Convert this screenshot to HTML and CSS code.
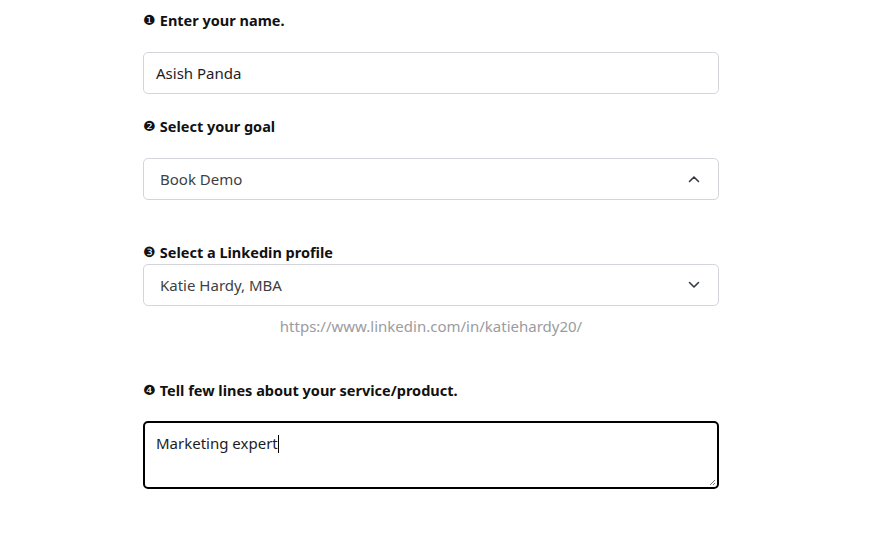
FILE: index.html
```html
<!DOCTYPE html>
<html>
<head>
<meta charset="utf-8">
<link rel="stylesheet" href="styles.css">
</head>
<body>
<form class="form">
  <div class="field f1">
    <label class="label"><span class="num">&#x2776;</span> Enter your name.</label>
    <div class="input">Asish Panda</div>
  </div>
  <div class="field f2">
    <label class="label"><span class="num">&#x2777;</span> Select your goal</label>
    <div class="select">
      <span>Book Demo</span>
      <svg class="chev" width="12" height="8" viewBox="0 0 12 8"><path d="M1.5 6.5 L6 2 L10.5 6.5" fill="none" stroke="#343a40" stroke-width="1.6" stroke-linecap="round" stroke-linejoin="round"/></svg>
    </div>
  </div>
  <div class="field f3">
    <label class="label"><span class="num">&#x2778;</span> Select a Linkedin profile</label>
    <div class="select">
      <span>Katie Hardy, MBA</span>
      <svg class="chev" width="12" height="8" viewBox="0 0 12 8"><path d="M1.5 1.5 L6 6 L10.5 1.5" fill="none" stroke="#343a40" stroke-width="1.6" stroke-linecap="round" stroke-linejoin="round"/></svg>
    </div>
    <div class="link">https://www.linkedin.com/in/katiehardy20/</div>
  </div>
  <div class="field f4">
    <label class="label"><span class="num">&#x2779;</span> Tell few lines about your service/product.</label>
    <div class="textarea">Marketing expert<span class="caret"></span>
      <svg class="grip" width="8" height="8" viewBox="0 0 8 8"><path d="M7 2 L2 7 M7 5 L5 7" stroke="#777" stroke-width="1"/></svg>
    </div>
  </div>
</form>
</body>
</html>
```

FILE: styles.css
```css
html, body {
  margin: 0;
  padding: 0;
  background: #ffffff;
}
body {
  font-family: "Noto Sans", "Open Sans", sans-serif;
  color: #212529;
}
.form {
  width: 576px;
  margin-left: 143px;
  padding-top: 10px;
  display: flex;
  flex-direction: column;
}
.field {
  display: flex;
  flex-direction: column;
}
.label {
  font-weight: 700;
  font-size: 14.5px;
  line-height: 20px;
  color: #111;
  display: flex;
  align-items: center;
  white-space: pre;
}
.num {
  font-family: "DejaVu Sans", sans-serif;
  font-size: 14px;
  font-weight: 400;
  width: 13px;
  line-height: 20px;
}
.input, .select {
  box-sizing: border-box;
  height: 42px;
  border: 1px solid #d3d5da;
  border-radius: 5px;
  display: flex;
  align-items: center;
  font-size: 15px;
}
.input {
  margin-top: 22px;
  padding-left: 12px;
  color: #1d1d1f;
}
.f2 { margin-top: 22px; }
.f2 .select { margin-top: 22px; }
.select {
  padding-left: 16px;
  padding-right: 18px;
  justify-content: space-between;
  color: #3c3f44;
}
.f3 { margin-top: 42px; }
.f3 .select { margin-top: 2px; }
.link {
  text-align: center;
  font-size: 15px;
  line-height: 20px;
  color: #9a9ca0;
  margin-top: 10px;
}
.f4 { margin-top: 44px; }
.textarea {
  position: relative;
  box-sizing: border-box;
  margin-top: 21px;
  height: 68px;
  border: 2px solid #000;
  border-radius: 5px;
  padding: 9px 11px;
  font-size: 15px;
  line-height: 22px;
  color: #1d1d1f;
}
.caret {
  display: inline-block;
  width: 1px;
  height: 18px;
  background: #000;
  vertical-align: -4px;
}
.grip {
  position: absolute;
  right: 1px;
  bottom: 1px;
}
```
